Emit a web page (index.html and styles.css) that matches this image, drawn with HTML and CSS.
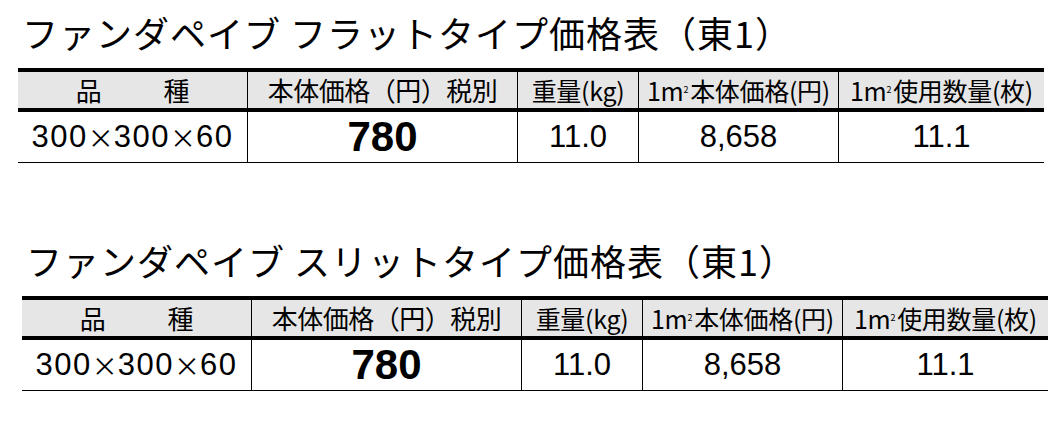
FILE: index.html
```html
<!DOCTYPE html>
<html lang="ja">
<head>
<meta charset="utf-8">
<title>ファンダペイブ 価格表</title>
<link rel="stylesheet" href="styles.css">
</head>
<body>
<section class="block block-flat">
  <h2 class="title">ファンダペイブ フラットタイプ価格表（東1）</h2>
  <div class="table">
    <div class="cell head"><span>品</span><span>種</span></div>
    <div class="cell head wide">本体価格（円）税別</div>
    <div class="cell head">重量(kg)</div>
    <div class="cell head">1m<sup>2</sup>本体価格(円)</div>
    <div class="cell head">1m<sup>2</sup>使用数量(枚)</div>
    <div class="cell body size">300<span class="x">×</span>300<span class="x">×</span>60</div>
    <div class="cell body price">780</div>
    <div class="cell body">11.0</div>
    <div class="cell body">8,658</div>
    <div class="cell body">11.1</div>
  </div>
</section>
<section class="block block-slit">
  <h2 class="title">ファンダペイブ スリットタイプ価格表（東1）</h2>
  <div class="table">
    <div class="cell head"><span>品</span><span>種</span></div>
    <div class="cell head wide">本体価格（円）税別</div>
    <div class="cell head">重量(kg)</div>
    <div class="cell head">1m<sup>2</sup>本体価格(円)</div>
    <div class="cell head">1m<sup>2</sup>使用数量(枚)</div>
    <div class="cell body size">300<span class="x">×</span>300<span class="x">×</span>60</div>
    <div class="cell body price">780</div>
    <div class="cell body">11.0</div>
    <div class="cell body">8,658</div>
    <div class="cell body">11.1</div>
  </div>
</section>
</body>
</html>
```
FILE: styles.css
```css
* { box-sizing: border-box; }
html, body { margin: 0; padding: 0; background: #fff; color: #000; }
body {
  font-family: "Liberation Sans", "Noto Sans CJK JP", sans-serif;
  width: 1061px;
  height: 423px;
  overflow: hidden;
}
.block { display: flex; flex-direction: column; }
.block-flat { padding: 14px 0 0 18px; }
.block-slit { padding: 79px 0 0 22px; }
.title {
  margin: 0 0 18px 0;
  padding-left: 4px;
  font-family: "Noto Sans CJK JP", sans-serif;
  font-weight: 400;
  font-size: 36px;
  line-height: 36px;
  height: 36px;
  letter-spacing: 1px;
  white-space: nowrap;
}
.table {
  display: grid;
  grid-template-columns: 229px 270px 121px 200px 206px;
  width: 1026px;
  border-top: 4px solid #000;
  border-bottom: 1px solid #000;
}
.cell {
  display: flex;
  align-items: center;
  justify-content: center;
  white-space: nowrap;
}
.cell + .cell { border-left: 1px solid #000; }
.cell:nth-child(6) { border-left: none; }
.head {
  height: 40px;
  background: #e6e6e6;
  border-bottom: 4px solid #000;
  font-family: "Noto Sans CJK JP", sans-serif;
  font-size: 25px;
  line-height: 36px;
  letter-spacing: -0.3px;
}
.head.wide { font-size: 26px; letter-spacing: -0.5px; }
.head:first-child { gap: 62px; font-size: 26px; }
.head sup {
  font-size: 9px;
  line-height: 0;
  vertical-align: 12px;
  margin-right: 2px;
}
.body {
  height: 50px;
  font-size: 31px;
  line-height: 50px;
}
.size { letter-spacing: 1.5px; }
.size .x { font-family: "Noto Sans CJK JP", sans-serif; font-size: 26px; letter-spacing: 0; }
.price { font-weight: 700; font-size: 42px; }
```
